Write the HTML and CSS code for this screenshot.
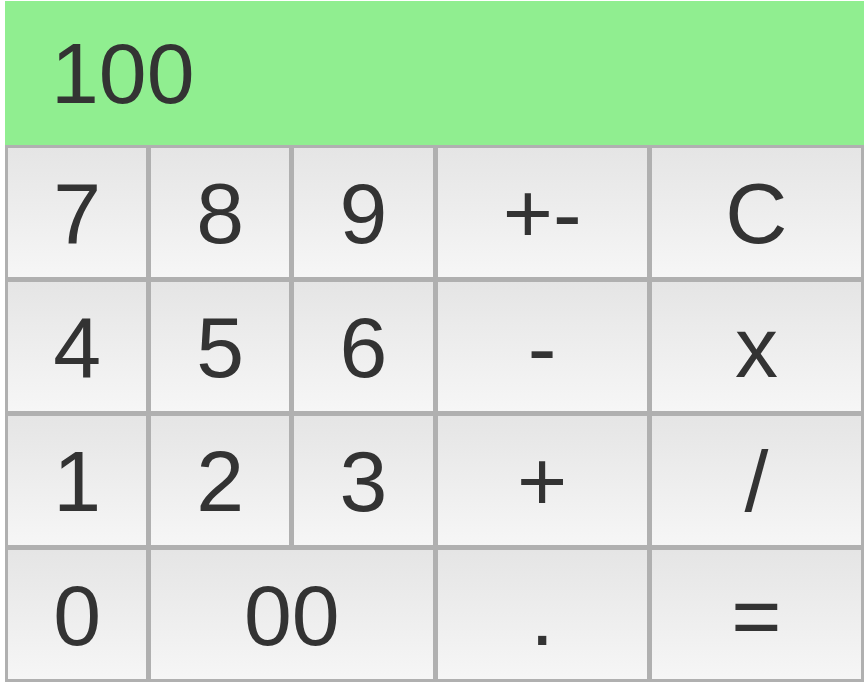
FILE: index.html
```html
<!DOCTYPE html>
<html>
<head>
<meta charset="utf-8">
<link rel="stylesheet" href="styles.css">
</head>
<body>
<div class="calc">
  <div class="display">100</div>
  <div class="keys">
    <button class="key">7</button>
    <button class="key">8</button>
    <button class="key">9</button>
    <button class="key">+-</button>
    <button class="key">C</button>
    <button class="key">4</button>
    <button class="key">5</button>
    <button class="key">6</button>
    <button class="key">-</button>
    <button class="key">x</button>
    <button class="key">1</button>
    <button class="key">2</button>
    <button class="key">3</button>
    <button class="key">+</button>
    <button class="key">/</button>
    <button class="key">0</button>
    <button class="key span2">00</button>
    <button class="key">.</button>
    <button class="key">=</button>
  </div>
</div>
</body>
</html>
```
FILE: styles.css
```css
html, body {
  margin: 0;
  padding: 0;
  background: #ffffff;
}
body {
  font-family: "Liberation Sans", Arial, Helvetica, sans-serif;
  color: #333333;
}
.calc {
  padding: 1px 0 0 5px;
}
.display {
  height: 144px;
  background: #90ee90;
  display: flex;
  align-items: center;
  padding-left: 46px;
  font-size: 86px;
  line-height: 1;
  color: #333333;
}
.keys {
  display: grid;
  grid-template-columns: 2fr 2fr 2fr 3fr 3fr;
  grid-template-rows: repeat(4, 133px);
  gap: 1px;
  background: #b0b0b0;
  border: 1px solid #b0b0b0;
}
.key {
  margin: 0;
  padding: 0;
  border: 2px solid #b0b0b0;
  background: linear-gradient(to bottom, #e5e5e5 0%, #f6f6f6 100%);
  font-family: "Liberation Sans", Arial, Helvetica, sans-serif;
  font-size: 86px;
  line-height: 1;
  color: #333333;
  display: flex;
  align-items: center;
  justify-content: center;
  border-radius: 0;
  outline: none;
  appearance: none;
}
.span2 {
  grid-column: span 2;
}
```
